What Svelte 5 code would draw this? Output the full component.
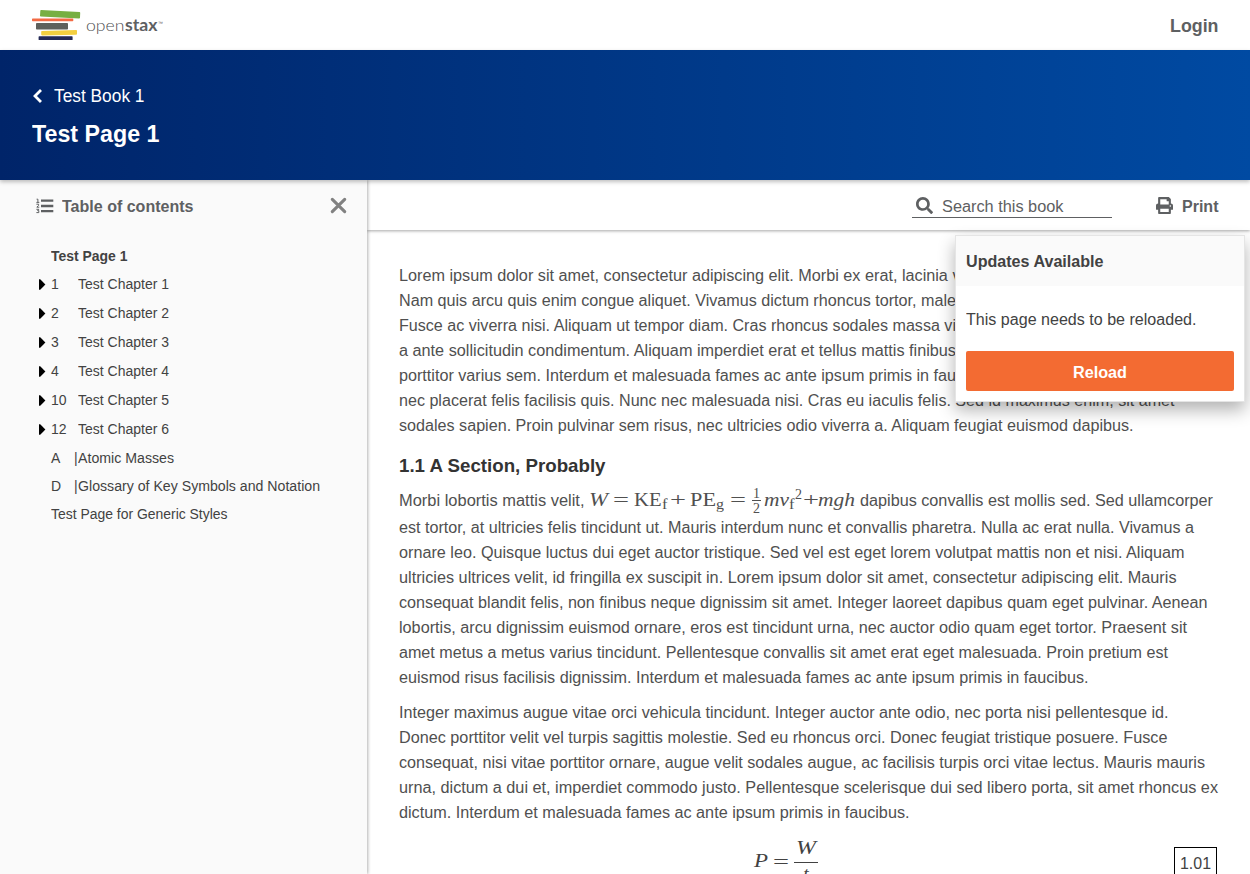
<script>
  // Stretches a run of text horizontally so that it takes up the given width.
  function fit(node, width) {
    node.style.display = 'inline-block';
    const range = document.createRange();
    range.selectNodeContents(node);
    const natural = range.getBoundingClientRect().width;
    node.style.width = width + 'px';
    node.style.textAlign = 'left';
    node.style.transformOrigin = '0 50%';
    node.style.transform = `scaleX(${width / natural})`;
  }

  const chapters = [
    { n: '1', t: 'Test Chapter 1' },
    { n: '2', t: 'Test Chapter 2' },
    { n: '3', t: 'Test Chapter 3' },
    { n: '4', t: 'Test Chapter 4' },
    { n: '10', t: 'Test Chapter 5' },
    { n: '12', t: 'Test Chapter 6' }
  ];

  const first = [
    ['Lorem ipsum dolor sit amet, consectetur adipiscing elit. Morbi ex erat, lacinia v', 561.5],
    ['Nam quis arcu quis enim congue aliquet. Vivamus dictum rhoncus tortor, male', 557],
    ['Fusce ac viverra nisi. Aliquam ut tempor diam. Cras rhoncus sodales massa vi', 557],
    ['a ante sollicitudin condimentum. Aliquam imperdiet erat et tellus mattis finibus', 557],
    ['porttitor varius sem. Interdum et malesuada fames ac ante ipsum primis in fau', 557],
    ['nec placerat felis facilisis quis. Nunc nec malesuada nisi. Cras eu iaculis felis. Sed id maximus enim, sit amet', 775.5],
    ['sodales sapien. Proin pulvinar sem risus, nec ultricies odio viverra a. Aliquam feugiat euismod dapibus.', 734.5]
  ];
  const second = [
    ['est tortor, at ultricies felis tincidunt ut. Mauris interdum nunc et convallis pharetra. Nulla ac erat nulla. Vivamus a', 795],
    ['ornare leo. Quisque luctus dui eget auctor tristique. Sed vel est eget lorem volutpat mattis non et nisi. Aliquam', 785.5],
    ['ultricies ultrices velit, id fringilla ex suscipit in. Lorem ipsum dolor sit amet, consectetur adipiscing elit. Mauris', 777.5],
    ['consequat blandit felis, non finibus neque dignissim sit amet. Integer laoreet dapibus quam eget pulvinar. Aenean', 808.5],
    ['lobortis, arcu dignissim euismod ornare, eros est tincidunt urna, nec auctor odio quam eget tortor. Praesent sit', 788],
    ['amet metus a metus varius tincidunt. Pellentesque convallis sit amet erat eget malesuada. Proin pretium est', 769],
    ['euismod risus facilisis dignissim. Interdum et malesuada fames ac ante ipsum primis in faucibus.', 689.5]
  ];
  const third = [
    ['Integer maximus augue vitae orci vehicula tincidunt. Integer auctor ante odio, nec porta nisi pellentesque id.', 769.5],
    ['Donec porttitor velit vel turpis sagittis molestie. Sed eu rhoncus orci. Donec feugiat tristique posuere. Fusce', 768.5],
    ['consequat, nisi vitae porttitor ornare, augue velit sodales augue, ac facilisis turpis orci vitae lectus. Mauris mauris', 806],
    ['urna, dictum a dui et, imperdiet commodo justo. Pellentesque scelerisque dui sed libero porta, sit amet rhoncus ex', 819],
    ['dictum. Interdum et malesuada fames ac ante ipsum primis in faucibus.', 510.5]
  ];
</script>

{#snippet lines(rows)}
  {#each rows as [text, width]}
    <div class="line"><span use:fit={width}>{text}</span></div>
  {/each}
{/snippet}

<div class="page">
  <header class="nav">
    <div class="logo">
      <svg width="50" height="34" viewBox="0 0 50 34">
        <path d="M9 2 L47.5 4 Q48.3 4 48.2 5 L48 9.8 Q48 10.5 47 10.5 L8.8 8.6 Q8 8.6 8 7.8 L8.3 3 Q8.3 2 9 2Z" fill="#77af42" />
        <rect x="0" y="10.4" width="41.3" height="2.8" rx=".7" fill="#f36b45" />
        <rect x="4" y="15" width="32" height="6.6" rx=".8" fill="#5e605c" />
        <path d="M10 22.9 L44.3 22 Q45 22 45 23 L45 26 Q45 26.6 44 26.7 L10 27.4 Q9.2 27.3 9.2 26.5 L9.2 23.7 Q9.2 22.9 10 22.9Z" fill="#f3cf40" />
        <rect x="6.6" y="28.3" width="34" height="3.8" rx=".7" fill="#232956" />
      </svg>
      <span class="word"><span use:fit={38.5}>open</span><b use:fit={32.5}>stax</b></span><span class="tm">™</span>
    </div>
    <a class="login"><span use:fit={48.5}>Login</span></a>
  </header>

  <section class="banner">
    <a class="back">
      <svg width="11" height="16" viewBox="0 0 11 16"><path d="M9 1.9 L3 8 L9 14.1" fill="none" stroke="#fff" stroke-width="2.8" /></svg>
      <span use:fit={90.5}>Test Book 1</span>
    </a>
    <h1><span use:fit={127.5}>Test Page 1</span></h1>
  </section>

  <div class="body">
    <aside>
      <div class="toc-head">
        <svg class="ol" width="18" height="16" viewBox="0 0 18 16" fill="none" stroke="#5e6062">
          <path d="M5 2.6H17.3M5 8H17.3M5 13.2H17.3" stroke-width="2.3" />
          <path d="M.6 1.2H1.9V4.2M.4 4.4H3.3M.4 6.2H2.6V7.4L.8 9.2H3.3M.4 11.3H2.8L1.6 12.6H2.8V14.6H.4" stroke-width="1" />
        </svg>
        <strong><span use:fit={131.5}>Table of contents</span></strong>
        <svg class="close" width="17" height="17" viewBox="0 0 17 17"><path d="M2.3 2.3 14.7 14.7M14.7 2.3 2.3 14.7" stroke="#818181" stroke-width="3.1" stroke-linecap="round" /></svg>
      </div>
      <nav>
        <div class="item current"><span use:fit={76.5}>Test Page 1</span></div>
        {#each chapters as c}
          <div class="item chapter">
            <svg class="tri" width="7" height="11" viewBox="0 0 7 11"><path d="M0 .2 1.2 .2 6.4 5.5 1.2 10.8 0 10.8Z" /></svg>
            <span class="num">{c.n}</span><span use:fit={91}>{c.t}</span>
          </div>
        {/each}
        <div class="item appendix first"><span class="num">A</span><i>|</i><span use:fit={96}>Atomic Masses</span></div>
        <div class="item appendix"><span class="num">D</span><i>|</i><span use:fit={242}>Glossary of Key Symbols and Notation</span></div>
        <div class="item"><span use:fit={176.5}>Test Page for Generic Styles</span></div>
      </nav>
    </aside>

    <main>
      <div class="toolbar">
        <div class="search">
          <svg width="17" height="17" viewBox="0 0 512 512" fill="#5e6062"><path d="M505 442.7L405.3 343c-4.5-4.5-10.6-7-17-7H372c27.6-35.3 44-79.7 44-128C416 93.1 322.9 0 208 0S0 93.1 0 208s93.1 208 208 208c48.3 0 92.7-16.4 128-44v16.3c0 6.4 2.5 12.5 7 17l99.7 99.7c9.4 9.4 24.6 9.4 33.9 0l28.3-28.3c9.4-9.4 9.4-24.6.1-34zM208 336c-70.7 0-128-57.2-128-128 0-70.7 57.2-128 128-128 70.7 0 128 57.2 128 128 0 70.7-57.2 128-128 128z" /></svg>
          <span use:fit={121.5}>Search this book</span>
        </div>
        <div class="print">
          <svg width="17" height="17" viewBox="0 0 512 512" fill="#5e6062"><path d="M448 192V77.25c0-8.49-3.37-16.62-9.37-22.63L393.37 9.37c-6-6-14.14-9.37-22.63-9.37H96C78.33 0 64 14.33 64 32v160c-35.35 0-64 28.65-64 64v112c0 8.84 7.16 16 16 16h48v96c0 17.67 14.33 32 32 32h320c17.67 0 32-14.33 32-32v-96h48c8.84 0 16-7.16 16-16V256c0-35.35-28.65-64-64-64zm-64 256H128v-96h256v96zm0-224H128V64h192v48c0 8.84 7.16 16 16 16h48v96zm48 72c-13.25 0-24-10.75-24-24 0-13.26 10.75-24 24-24s24 10.74 24 24c0 13.25-10.75 24-24 24z" /></svg>
          <strong><span use:fit={36.5}>Print</span></strong>
        </div>
      </div>

      <article>
        <div class="para">{@render lines(first)}</div>
        <h2><span use:fit={206.5}>1.1 A Section, Probably</span></h2>
        <div class="para">
          <div class="line mathline">
            <span class="lead"><span use:fit={185.5}>Morbi lobortis mattis velit,</span></span>
            <span class="math">
              <em class="w"><span use:fit={19}>W</span></em><span class="eq"><span use:fit={16}>=</span></span><span class="ke"><span use:fit={27.5}>KE</span></span><span class="sub f"><span use:fit={5.5}>f</span></span><span class="plus"><span use:fit={16}>+</span></span><span class="pe"><span use:fit={26}>PE</span></span><span class="sub g"><span use:fit={8}>g</span></span><span class="eq2"><span use:fit={16}>=</span></span><span class="frac"><span>1</span><span>2</span></span><em class="mv"><span use:fit={25}>mv</span></em><span class="sub f2"><span use:fit={5.5}>f</span></span><span class="sup">2</span><span class="p2"><span use:fit={16}>+</span></span><em class="mgh"><span use:fit={37}>mgh</span></em>
            </span>
            <span use:fit={353}>dapibus convallis est mollis sed. Sed ullamcorper</span>
          </div>
          {@render lines(second)}
        </div>
        <div class="para">{@render lines(third)}</div>
        <div class="equation">
          <div class="display"><em><span use:fit={14}>P</span></em><span class="deq"><span use:fit={16}>=</span></span><span class="dfrac"><em><span use:fit={20}>W</span></em><em>t</em></span></div>
          <div class="number"><span use:fit={31}>1.01</span></div>
        </div>
      </article>
    </main>
  </div>

  <div class="modal">
    <div class="modal-head"><span use:fit={137.5}>Updates Available</span></div>
    <div class="modal-body">
      <p><span use:fit={230.5}>This page needs to be reloaded.</span></p>
      <button><span use:fit={54}>Reload</span></button>
    </div>
  </div>
</div>

<style>
  :global(body) { margin: 0; overflow: hidden; background: #fff; }
  .page { position: relative; height: 874px; overflow: hidden; display: flex; flex-direction: column; font-family: "Liberation Sans", Arial, sans-serif; font-size: 16px; color: #424242; white-space: nowrap; }
  h1, h2, p { margin: 0; }
  em, i { font-style: normal; }
  svg { display: block; flex: none; }

  .nav { height: 50px; flex: none; display: flex; justify-content: space-between; align-items: center; padding: 0 32px; box-sizing: border-box; }
  .logo { display: flex; align-items: center; height: 34px; }
  .word { display: flex; margin-left: 4px; width: 72px; font-family: Lato, sans-serif; font-size: 16.5px; font-weight: 400; line-height: 20px; color: #5e6062; }
  .word > span { font-weight: 300; color: #4e5052; }
  .word b { font-weight: 700; }
  .tm { font-size: 5px; line-height: 6px; align-self: flex-start; margin-top: 12px; color: #5e6062; }
  .login { font-size: 18px; font-weight: 700; line-height: 20px; color: #5e6062; margin-top: 2px; }

  .banner { height: 130px; flex: none; box-sizing: border-box; padding: 34px 32px 0; color: #fff; background: linear-gradient(to right, #002469, #004aa2); box-shadow: 0 2px 4px rgba(0, 0, 0, .25); position: relative; z-index: 2; }
  .back { display: flex; align-items: center; gap: 11px; height: 24px; font-size: 18px; line-height: 24px; }
  h1 { margin-top: 10px; font-size: 24px; line-height: 32px; }

  .body { display: flex; flex: 1; min-height: 0; }
  aside { width: 367px; flex: none; background: #fafafa; box-shadow: 1px 0 3px rgba(0, 0, 0, .3); position: relative; z-index: 1; }
  .toc-head { display: flex; align-items: center; height: 51px; padding: 0 20px 0 36px; color: #5e6062; }
  .toc-head strong { margin: 2px auto 0 8px; }
  nav { padding: 11px 0 0 39px; font-size: 14px; }
  .item { display: flex; align-items: center; height: 28px; padding-left: 12px; line-height: 20px; }
  .item.current { font-weight: 700; height: 27px; }
  .item.chapter { height: 29px; padding-left: 0; }
  .item.first { margin-top: 1px; }
  .tri { margin: 2px 5px 0 0; }
  .num { width: 27px; flex: none; }
  .appendix .num { width: 23px; }
  .appendix i { width: 4px; flex: none; }

  main { flex: 1; min-width: 0; }
  .toolbar { height: 50px; display: flex; justify-content: flex-end; align-items: flex-start; padding-right: 32px; box-sizing: border-box; box-shadow: 0 1px 3px rgba(0, 0, 0, .35); color: #5e6062; }
  .search { display: flex; gap: 8.5px; width: 200px; height: 38px; box-sizing: border-box; padding: 17px 0 0 4px; border-bottom: 1px solid #5e6062; line-height: 20px; }
  .print { display: flex; gap: 8.5px; margin: 17px 0 0 44px; line-height: 20px; }

  article { padding: 33px 32px 0; color: #505050; }
  .para { margin-bottom: 10px; }
  .line { height: 25px; line-height: 25px; }
  h2 { height: 39px; box-sizing: border-box; margin: -4px 0 5px; padding-top: 10px; font-size: 19px; line-height: 24px; color: #333; }
  .mathline { display: flex; height: 27px; }
  .lead { width: 190px; flex: none; }
  .math { display: flex; width: 271px; flex: none; font-family: "Liberation Serif", serif; font-size: 19.5px; line-height: 24px; color: #505050; }
  .math > * { flex: none; }
  .math em, .display em { font-style: italic; }
  .w { width: 24px; }
  .eq { width: 21px; }
  .ke { width: 28px; }
  .sub { font-size: 14px; padding-top: 5px; }
  .sub.f { width: 8px; }
  .plus { width: 20px; }
  .pe { width: 26px; }
  .sub.g { width: 14px; }
  .eq2 { width: 22px; }
  .frac { width: 9px; height: 26px; margin-right: 3px; display: flex; flex-direction: column; text-align: center; font-size: 14px; line-height: 12px; }
  .frac span:first-child { border-bottom: 1px solid #505050; height: 12px; }
  .frac span:last-child { padding-top: 2px; }
  .mv { width: 25px; }
  .sub.f2 { width: 6px; }
  .sup { width: 8px; font-size: 14px; line-height: 14px; }
  .p2 { width: 15px; }

  .equation { display: flex; align-items: flex-start; margin-top: 12px; color: #424242; }
  .display { display: flex; width: 64px; margin: 0 auto 0 355px; font-family: "Liberation Serif", serif; font-size: 19.5px; line-height: 26px; }
  .display > em { width: 19px; padding-top: 11px; }
  .deq { width: 22px; padding-top: 12px; }
  .dfrac { display: flex; flex-direction: column; width: 24px; flex: none; text-align: center; line-height: 22px; }
  .dfrac em:first-child { height: 25px; border-bottom: 1px solid #424242; }
  .number { width: 43px; height: 36px; box-sizing: border-box; border: 1px solid #000; margin: 10px 1px 0 0; padding: 3px 0 0 5px; line-height: 26px; }

  .modal { position: absolute; left: 955px; top: 235px; width: 290px; height: 167px; box-sizing: border-box; z-index: 5; background: #fff; border: 1px solid #e5e5e5; box-shadow: 0 8px 16px rgba(0, 0, 0, .3); }
  .modal-head { height: 50px; padding: 2px 10px 0; box-sizing: border-box; line-height: 48px; font-weight: 700; background: #fafafa; }
  .modal-body { padding: 22px 10px 0; }
  .modal-body p { height: 24px; line-height: 24px; margin-bottom: 19px; }
  button { display: block; width: 268px; height: 40px; padding: 3px 0 0; border: 0; border-radius: 2px; background: #f36b32; color: #fff; font: 700 16px "Liberation Sans", Arial, sans-serif; }
</style>
